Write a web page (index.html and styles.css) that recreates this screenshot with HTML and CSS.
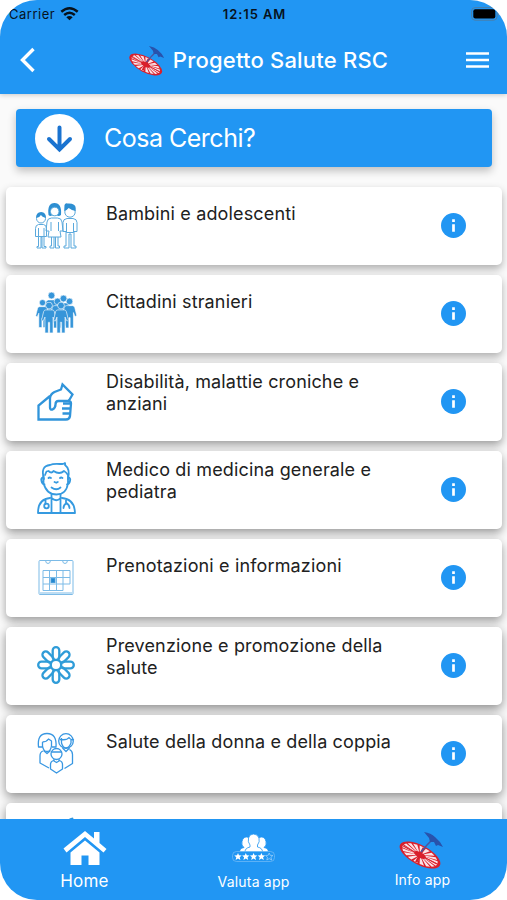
FILE: index.html
```
<!DOCTYPE html>
<html lang="it">
<head>
  <meta charset="UTF-8">
  <meta name="viewport" content="width=device-width, initial-scale=1.0">
  <title>Progetto Salute RSC</title>
  <link rel="stylesheet" href="styles.css">
</head>
<body>

  <!-- Simboli riutilizzati -->
  <svg class="symbols" width="0" height="0">
    <symbol id="logo" viewBox="0 0 46 38">
      <g transform="translate(22 24) rotate(28) scale(1 .43)">
        <circle r="22.500" fill="#d9202c"/>
        <circle r="13" fill="none" stroke="#fbe3e6" stroke-width="13" stroke-dasharray="3.200 1.600"/>
        <path d="M-19 0H19M0-19V19" stroke="#d9202c" stroke-width="2.500"/>
        <circle r="4" fill="#d9202c"/>
      </g>
      <path d="M23 21l6-7 5-5" fill="none" stroke="#4a56a0" stroke-width="1.500"/>
      <path d="M26 1q7 1 11 5 5 4 8 10l-5-2-2 1-2-4-4 0-1-4z" fill="#2853ac"/>
    </symbol>
    <symbol id="info" viewBox="0 0 24 24">
      <circle cx="12" cy="12" r="12" fill="#2196f3"/>
      <path d="M10.700 10.700h2.600v7.300h-2.600zM10.700 6h2.600v2.600h-2.600z" fill="#fff"/>
    </symbol>
    <symbol id="man" viewBox="0 0 14 30">
      <circle cx="7" cy="3.300" r="3.200"/>
      <path d="M4 7.400h6q1.400 0 2 1.500l2 8q-1.200 1.400-2 .2l-1.200-3V29H7.600V19H6.400v10H3.200V14.100L2 17.100q-1 1.200-2-.2l2-8q.6-1.500 2-1.500z"/>
    </symbol>
  </svg>

  <div class="screen">

    <header>
      <div class="status">
        <span class="carrier">Carrier
          <svg width="19" height="14" viewBox="0 0 19 14" fill="none" stroke="#07121c" stroke-width="2.500">
            <path d="M1.300 4.800q8.200-7 16.400 0M4.200 8q5.300-4.500 10.600 0"/>
            <path d="M9.500 13.200L6.300 10.300q3.200-2.600 6.400 0z" fill="#07121c" stroke="none"/>
          </svg>
        </span>
        <span class="clock">12:15 AM</span>
        <svg class="battery" width="29" height="14" viewBox="0 0 29 14">
          <rect x=".6" y=".6" width="25.500" height="12.600" rx="3.500" fill="none" stroke="#4b7ea8"/>
          <rect x="2.300" y="2.300" width="22" height="9.200" rx="2" fill="#000"/>
          <path d="M27.200 4.500q1.800 2.400 0 4.800z" fill="#6c8aa3"/>
        </svg>
      </div>
      <div class="toolbar">
        <svg class="back" width="16" height="26" viewBox="0 0 16 26"><path d="M13.500 2L2.500 13l11 11" fill="none" stroke="#fff" stroke-width="3.400"/></svg>
        <h1><svg class="logo" width="37" height="31"><use href="#logo"/></svg><span>Progetto Salute RSC</span></h1>
        <svg class="menu" width="23" height="16" viewBox="0 0 23 16"><path d="M0 1.500h23M0 8h23M0 14.500h23" stroke="#fff" stroke-width="2.600"/></svg>
      </div>
    </header>

    <main>
      <div class="search">
        <svg width="49" height="49" viewBox="0 0 49 49">
          <circle cx="24.500" cy="24.500" r="24.500" fill="#fff"/>
          <path d="M24.500 13.500v22M14 25l10.500 10.500L35 25" fill="none" stroke="#1a73d0" stroke-width="4" stroke-linecap="round"/>
        </svg>
        <h2>Cosa Cerchi?</h2>
      </div>

      <ul class="list">
        <li class="card">
          <svg class="icon" viewBox="0 0 50 50" fill="none" stroke="#5ba9dc" stroke-width="1">
            <g>
              <circle cx="10" cy="18.500" r="4.500"/>
              <path d="M5.200 18q-.5-5.500 5-6 5 .3 4.700 6-4-1-5-3-1 2.500-4.700 3z" fill="#2e8fd2" stroke="none"/>
              <path d="M7.500 24.500q-3 .5-3 4v8h3v10h-1.500v1.500h4v-11h1v11h4v-1.500h-2v-10h2.500v-8q0-3.500-3-4zM7.500 28v8.500h5.500v-8.500"/>
            </g>
            <path d="M17.500 15q-1.500-12 6-12t6.500 12q-2 1.500-4 .5h-5q-2 1-3.500-.5z" fill="#2e8fd2" stroke="none"/>
            <circle cx="23.700" cy="11.500" r="4.300" fill="#fff"/>
            <path d="M20.500 18q-4 0-4.500 4l-1 9h3l-1 6h13l-1-6h3l-1-9q-.5-4-4.500-4zM20 22v9M27.500 22v9M20.500 37v9h-1.500v2h4v-11M27 37v9h1.500v2h-4v-11"/>
            <circle cx="39" cy="12" r="5.200"/>
            <path d="M33.200 11l.3-6q1-2.500 3-1.500 8-.5 8.200 4.500v3q-4-.5-7-3-2 2.500-4.500 3z" fill="#2e8fd2" stroke="none"/>
            <path d="M36 18.500q-4 .5-4 4v9h3v14.500h-2v2h5v-14h2v14h5v-2h-2v-14.500h3v-9q0-3.500-4-4zM35.500 23v9.500h7v-9.500"/>
          </svg>
          <p>Bambini e adolescenti</p>
          <svg class="info"><use href="#info"/></svg>
        </li>
        <li class="card">
          <svg class="icon" viewBox="0 0 50 50" fill="#3695d9" stroke="#fff" stroke-width=".6">
            <use href="#man" x="13" y="4" width="15" height="32"/>
            <use href="#man" x="25" y="7" width="15" height="32"/>
            <use href="#man" x="4" y="11.500" width="15" height="29"/>
            <use href="#man" x="31" y="10" width="15" height="31"/>
            <use href="#man" x="19" y="10" width="15" height="31"/>
            <use href="#man" x="10.500" y="14" width="15" height="32"/>
            <use href="#man" x="22.500" y="14" width="15" height="32"/>
          </svg>
          <p>Cittadini stranieri</p>
          <svg class="info"><use href="#info"/></svg>
        </li>
        <li class="card">
          <svg class="icon" viewBox="0 0 50 50" fill="none" stroke="#3094da" stroke-width="2.300" stroke-linejoin="miter">
            <path d="M19 20L7.500 29.500v14h27.500q3.500 0 4-3.500l1-12.500q0-2.500-3-2.500h-9.500q-3 0-3 3.500t-3 5q-2.500.5-2.500-2V22q.5-4 4.500-6l6.500-2.500L31.500 8.500l10 10-3.500 6"/>
            <path d="M32 27.500h8M31 32.500h8.500M31.500 37.500h7.500"/>
          </svg>
          <p class="two-lines">Disabilità, malattie croniche e anziani</p>
          <svg class="info"><use href="#info"/></svg>
        </li>
        <li class="card">
          <svg class="icon tall" viewBox="0 0 50 56" fill="none" stroke="#359ae0" stroke-width="1.800" stroke-linecap="round" stroke-linejoin="round">
            <path d="M13 18q-4-13 6-14 3-1.500 10-1 4.500 0 5-1 .5 1.200 0 2 5.500 4 3 14"/>
            <path d="M14 14l1.500-3.500 2-.5q3 3 5 0 6 4 10.500 0 2 1 4 4"/>
            <path d="M12.500 15v7q3 11.500 13 11.500T37 22v-7M12.500 16q-3 1-2 4 .5 3 3 3.500M37 16q3 1 2 4-.5 3-3 3.500"/>
            <path d="M17.500 17q1-1 2.500 0M29 17q1-1 2.500 0M23.500 21l1.800.8 1.500-.8M20.500 26.500q5 3.500 9 0"/>
            <path d="M20.500 33v4q5 4.500 9 0v-4M19 37q-12 1-12 15h37Q43.500 38 31 37M20.500 38v13M29.500 38v13M14.500 38v5M35 39v3M35.500 42q-3 2-3 5M35.500 42q3 2 3 5"/>
            <circle cx="15.500" cy="45" r="2.300"/>
          </svg>
          <p class="two-lines">Medico di medicina generale e pediatra</p>
          <svg class="info"><use href="#info"/></svg>
        </li>
        <li class="card">
          <svg class="icon" viewBox="0 0 50 50" fill="none" stroke="#7cbbe7" stroke-width="1">
            <rect x="8" y="8.500" width="34" height="34" rx="1"/>
            <path d="M14.500 8q0 3.500 2.500 3.500T19.500 8M31.500 8q0 3.500 2.500 3.500T36.500 8M9 41h32"/>
            <path d="M12 18.500h27v13.500h-7v6.500h-20zM12 25.500h27M12 32h20M18.500 18.500v20M25.500 18.500v20M32 18.500v13.500"/>
            <rect x="20" y="26.500" width="4" height="4" fill="#2387cf" stroke="#449bda"/>
          </svg>
          <p>Prenotazioni e informazioni</p>
          <svg class="info"><use href="#info"/></svg>
        </li>
        <li class="card">
          <svg class="icon" viewBox="0 0 50 50" fill="none" stroke="#2f9cd8" stroke-width="2.300">
            <g id="petals">
              <rect x="21.700" y="7.200" width="6.600" height="13" rx="3.300"/>
              <rect x="21.700" y="7.200" width="6.600" height="13" rx="3.300" transform="rotate(45 25 25)"/>
              <rect x="21.700" y="7.200" width="6.600" height="13" rx="3.300" transform="rotate(90 25 25)"/>
              <rect x="21.700" y="7.200" width="6.600" height="13" rx="3.300" transform="rotate(135 25 25)"/>
            </g>
            <use href="#petals" transform="rotate(180 25 25)"/>
            <circle cx="25" cy="25" r="5.200" fill="#fff"/>
          </svg>
          <p class="two-lines">Prevenzione e promozione della salute</p>
          <svg class="info"><use href="#info"/></svg>
        </li>
        <li class="card">
          <svg class="icon" viewBox="0 0 50 50" fill="none" stroke="#3897e2" stroke-width="1.300" stroke-linejoin="round">
            <path d="M12 19H7.500Q6 5.500 16 5.500T25 19h-4M11.500 14v4q1 5.500 4.500 5.500t4.500-5.500v-5l-3-2q-2 3-6 3"/>
            <circle cx="35" cy="13" r="7.300"/>
            <path d="M29 11.500q7 1 9-2 2 3 5 2M30.500 10v5q1.500 5 4.500 5t5-5v-4"/>
            <path d="M12.500 22.500l3.500 3 3.500-3M12 23q-3 1-3 5v7l9 5M31.500 20l3.500 3.500 3.500-3.500M38.500 21.500q3 1.500 3 5v9l-8 5"/>
            <circle cx="25.500" cy="26" r="5.500"/>
            <path d="M20.500 24h10M23 31v2l2.500 1.500L28 33v-2M22.500 32.500q-3 1-3 4v4.500l6 4 6-4v-4.500q0-3-3-4"/>
          </svg>
          <p>Salute della donna e della coppia</p>
          <svg class="info"><use href="#info"/></svg>
        </li>
        <li class="card">
          <svg class="icon" viewBox="0 0 50 50" fill="#3094da">
            <path d="M34 8q2-5.500 8-6.500l.5 1.500-3 5z"/>
          </svg>
        </li>
      </ul>
    </main>

    <nav>
      <a class="home">
        <svg width="44" height="35" viewBox="0 0 44 35" fill="#fff">
          <path d="M22 0l9 7.500V1h5.500v11l7 6-3 3.500L22 6 3.500 21.500.5 17.500z"/>
          <path d="M7.500 21.500L22 9.500l14.500 12V34h-11v-9.500h-7V34h-11z"/>
        </svg>
        <span>Home</span>
      </a>
      <a class="rate">
        <svg width="44" height="30" viewBox="0 0 44 30" fill="#fff">
          <g stroke="#2196f3" stroke-width=".8">
            <path d="M8 19q-1-3.500 4-4.500-3-2-2-6 1-4.500 4.500-4.500t4.500 5v10zM36 19q1-3.500-4-4.500 3-2 2-6-1-4.500-4.500-4.500T25 9v10z"/>
            <path d="M13 19q0-4 5-5v-2Q15.500 9 16.500 5q1-4 5-4t5.500 4q1 4-1.500 7v2q5 1 5 5z"/>
          </g>
          <rect x=".5" y="18.500" width="42" height="10" rx="4" fill="#2196f3" stroke="#79bdf5" stroke-width=".7"/>
          <path id="star" d="M6 20l1 2.300 2.700.2-2 1.800.7 2.700L6 25.600 3.600 27l.7-2.700-2-1.800 2.700-.2z"/>
          <use href="#star" x="7.800"/>
          <use href="#star" x="15.600"/>
          <use href="#star" x="23.400"/>
          <path d="M37.200 20l1 2.300 2.700.2-2 1.800.7 2.700-2.400-1.400-2.400 1.400.7-2.700-2-1.800 2.700-.2z" fill="none" stroke="#a8d5fa" stroke-width=".7"/>
        </svg>
        <span>Valuta app</span>
      </a>
      <a class="about">
        <svg width="46" height="38"><use href="#logo"/></svg>
        <span>Info app</span>
      </a>
    </nav>

  </div>

</body>
</html>
```
FILE: styles.css
```
* {
  box-sizing: border-box;
}

body {
  margin: 0;
  background-color: #fff;
  font-family: Inter, "Liberation Sans", sans-serif;
  color: #212121;
}

svg {
  display: block;
  flex: none;
}

.symbols {
  position: absolute;
}

/* Schermo del telefono */
.screen {
  width: 507px;
  height: 900px;
  display: flex;
  flex-direction: column;
  overflow: hidden;
  border-radius: 37px;
  background-color: #fafafa;
}

/* Barra superiore */
header {
  flex: none;
  height: 94px;
  background-color: #2196f3;
  box-shadow: 0 1px 5px rgba(0, 0, 0, 0.2);
}

.status {
  display: grid;
  grid-template-columns: 1fr auto 1fr;
  align-items: center;
  height: 27px;
  padding: 0 7px 0 9px;
  font-size: 13px;
  color: #07121c;
}

.carrier {
  display: flex;
  align-items: center;
  gap: 5px;
  letter-spacing: 0.5px;
}

.clock {
  font-weight: 600;
  letter-spacing: 0.9px;
}

.battery {
  justify-self: end;
}

.toolbar {
  display: flex;
  align-items: center;
  justify-content: space-between;
  height: 66px;
  padding: 0 18px 0 20px;
}

h1 {
  display: flex;
  align-items: center;
  gap: 8px;
  margin: 0 0 0 14px;
  font-size: 22px;
  font-weight: 500;
  letter-spacing: 0.2px;
  color: #fff;
}

/* Titolo della ricerca */
main {
  flex: 1;
  min-height: 0;
  overflow: hidden;
}

.search {
  display: flex;
  align-items: center;
  gap: 20px;
  height: 58px;
  margin: 15px 15px 20px 16px;
  padding-left: 19px;
  border-radius: 4px;
  background-color: #2196f3;
  box-shadow: 0 4px 8px rgba(0, 0, 0, 0.24);
}

h2 {
  margin: 0;
  font-size: 25px;
  font-weight: 400;
  letter-spacing: -0.5px;
  color: #fff;
}

/* Elenco delle voci */
.list {
  display: flex;
  flex-direction: column;
  gap: 10px;
  margin: 0;
  padding: 0 5px 0 6px;
  list-style: none;
}

.card {
  display: flex;
  flex: none;
  align-items: center;
  height: 78px;
  padding: 0 36px 0 25px;
  border-radius: 5px;
  background-color: #fff;
  box-shadow: 0 4px 8px rgba(0, 0, 0, 0.3);
}

/* L'ombra diventa più intensa scendendo */
.card:nth-child(n+3) {
  box-shadow: 0 4px 10px rgba(0, 0, 0, 0.38);
}

.card:nth-child(n+6) {
  box-shadow: 0 4px 11px rgba(0, 0, 0, 0.44);
}

.icon {
  width: 50px;
  height: 50px;
  margin-bottom: 2px;
}

.tall {
  height: 56px;
}

.card p {
  align-self: flex-start;
  width: 300px;
  margin: 16px 0 0 25px;
  font-size: 18px;
  line-height: 22px;
  letter-spacing: 0.15px;
}

.card .two-lines {
  margin-top: 8px;
}

.info {
  width: 25px;
  height: 25px;
  margin: 0 0 2px auto;
}

/* Barra inferiore */
nav {
  z-index: 1;
  display: grid;
  grid-template-columns: repeat(3, 1fr);
  flex: none;
  height: 81px;
  background-color: #2196f3;
  color: #fff;
}

nav a {
  display: flex;
  flex-direction: column;
  align-items: center;
  font-size: 14px;
  line-height: 18px;
  letter-spacing: 0.2px;
}

.home {
  padding-top: 12px;
  gap: 6px;
}

.home span {
  font-size: 17px;
}

.rate {
  padding-top: 14px;
  gap: 10px;
}

.about {
  padding-top: 12px;
  gap: 2px;
}

.about svg {
  margin-right: 4px;
}
```
